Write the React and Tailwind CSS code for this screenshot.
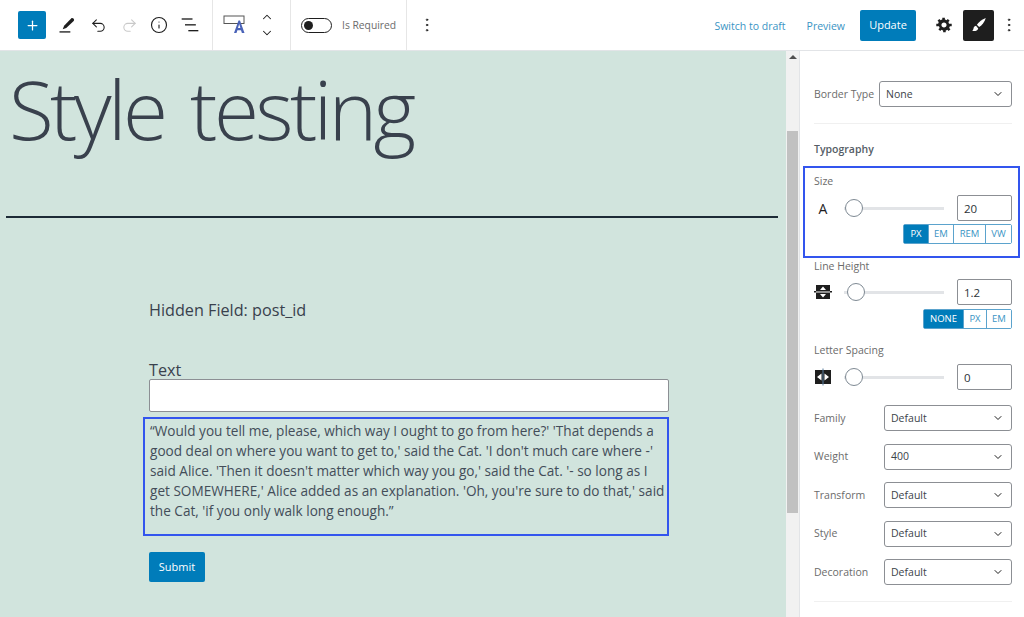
import React from 'react';
import { Plus, Undo2, Redo2, Info, ChevronUp, ChevronDown, MoreVertical } from 'lucide-react';

const font = "font-['Open_Sans','Noto_Sans',sans-serif]";

const Pen = () => (
  <svg width="20" height="20" viewBox="0 0 24 24" fill="#1e1e1e">
    <path d="M20 4.500c-1-1-2.200-1.200-3-.4L8.500 13l-1.600 4.200 4.200-1.500L20 7.300c.6-.8.6-2 0-2.800z" />
    <rect x="3" y="19.500" width="13" height="1.600" />
  </svg>
);

const ListView = () => (
  <svg width="20" height="20" viewBox="0 0 24 24" fill="#1e1e1e">
    <rect x="2" y="4" width="13" height="1.600" />
    <rect x="6" y="11" width="13" height="1.600" />
    <rect x="10" y="18" width="12" height="1.600" />
  </svg>
);

const BlockIcon = () => (
  <svg width="26" height="22" viewBox="0 0 26 22">
    <rect x="1" y="2" width="20" height="7.500" fill="#fff" stroke="#555" strokeWidth="1" />
    <path d="M11 19 15.500 6.500h1.500L21.500 19h-2.600l-.9-2.800h-3.600l-.9 2.800zM15 14h2.400L16.200 10z" fill="#4a63b8" />
  </svg>
);

const Gear = () => (
  <svg width="16" height="18" viewBox="0 0 18 21" fill="#1e1e1e" fillRule="evenodd">
    <path d="M18 12h-2.180c-.17.7-.44 1.350-.81 1.930l1.540 1.540-2.100 2.100-1.540-1.540c-.58.36-1.230.63-1.910.79V19H8v-2.180c-.68-.16-1.330-.43-1.910-.79l-1.540 1.540-2.120-2.120 1.540-1.540c-.36-.58-.63-1.230-.79-1.910H0V9h2.180c.16-.68.43-1.330.79-1.910L1.430 5.550l2.120-2.120 1.540 1.540c.58-.36 1.230-.63 1.910-.79V2h3v2.180c.68.16 1.330.43 1.910.79l1.540-1.540 2.120 2.120-1.540 1.540c.36.58.63 1.230.79 1.910H18v3zM9 13.500c1.660 0 3-1.340 3-3s-1.340-3-3-3-3 1.340-3 3 1.340 3 3 3z" />
  </svg>
);

const Brush = () => (
  <svg width="18" height="18" viewBox="0 0 24 24" fill="#fff">
    <path d="M21 2.500c-4.500 1.500-9.500 5.500-11.800 9.200l3 3C16 12.300 19.800 7.200 21 2.500z" />
    <path d="M8 13c-2.400.4-3 2-3.300 3.700-.2 1.200-.8 2.100-1.700 2.800 3 1.200 6.800.5 8-3z" />
  </svg>
);

const LineHeightIcon = () => (
  <svg width="18" height="18" viewBox="0 0 18 18">
    <rect x="2" y="2" width="14" height="14" fill="#1e1e1e" />
    <rect x="0" y="8" width="18" height="1.500" fill="#1e1e1e" />
    <rect x="2" y="8.500" width="14" height="1" fill="#fff" />
    <path d="M9 3.500 12 7H6zM9 14.500 6 11h6z" fill="#fff" />
  </svg>
);

const LetterSpacingIcon = () => (
  <svg width="18" height="18" viewBox="0 0 18 18">
    <rect x="1" y="2" width="16" height="14" fill="#1e1e1e" />
    <rect x="8.500" y="0.500" width="1" height="17" fill="#5b7fa0" />
    <path d="M3 9 7.500 5.500v7zM15 9l-4.500-3.500v7z" fill="#fff" />
  </svg>
);

const ToolbarDivider = () => <div className="w-px h-[50px] bg-[#e6e6e6]" />;

const Select = ({ label, value, width = 'w-[128px]' }) => (
  <div className="flex items-center justify-between h-[26px]">
    <span className="pt-[1px] text-[10.500px] text-[#6b6b6b]">{label}</span>
    <div className={`${width} h-[26px] border border-[#8c8f94] rounded-[3px] bg-white flex items-center justify-between pl-[6px] pr-[7px] text-[10.500px] text-[#3c434a]`}>
      <span className="pt-[1px]">{value}</span>
      <ChevronDown className="w-[12px] h-[12px] text-[#1e1e1e]" strokeWidth={2} />
    </div>
  </div>
);

const Slider = ({ icon, value, thumb = 'left-[1px]' }) => (
  <div className="flex items-center h-[26px]">
    <div className="w-[18px] flex justify-center text-[14px] font-medium text-[#1e1e1e]">{icon}</div>
    <div className="relative flex-1 flex items-center ml-[12px] mr-[13px] h-[18px]">
      <div className="w-full h-[3px] bg-[#e2e4e7]" />
      <div className={`absolute ${thumb} w-[18px] h-[18px] rounded-full border border-[#7e8993] bg-white`} />
    </div>
    <div className="w-[55px] h-[26px] border border-[#8c8f94] rounded-[2px] bg-white flex items-center pl-[6px] pt-[1px] text-[11.500px] text-[#2c3338]">{value}</div>
  </div>
);

const Units = ({ items }) => (
  <div className="flex justify-end">
    <div className="flex h-[20px] border border-[#5ba3cd] rounded-[2px]">
      {items.map((u, i) => (
        <div
          key={u.label}
          className={`${u.w} flex items-center justify-center text-[9.500px] ${i > 0 ? 'border-l border-[#5ba3cd]' : ''} ${u.active ? 'bg-[#007cba] text-white' : 'bg-white text-[#3a94c4]'}`}
        >
          {u.label}
        </div>
      ))}
    </div>
  </div>
);

export default function App() {
  return (
    <div className={`w-[1024px] h-[617px] overflow-hidden bg-white flex flex-col ${font}`}>
      {/* Top toolbar */}
      <header className="h-[51px] shrink-0 flex items-center border-b border-[#e2e4e7] bg-white">
        <div className="w-[212px] flex items-center pl-[18px]">
          <button className="w-[28px] h-[28px] bg-[#007cba] rounded-[2px] flex items-center justify-center">
            <Plus className="w-[15px] h-[15px] text-white" strokeWidth={2} />
          </button>
          <div className="ml-[11px] w-[20px] flex justify-center"><Pen /></div>
          <div className="ml-[11px] w-[20px] flex justify-center">
            <Undo2 className="w-[17px] h-[17px] text-[#1e1e1e]" strokeWidth={1.5} />
          </div>
          <div className="ml-[11px] w-[20px] flex justify-center">
            <Redo2 className="w-[17px] h-[17px] text-[#c9c9c9]" strokeWidth={1.5} />
          </div>
          <div className="ml-[10px] w-[20px] flex justify-center">
            <Info className="w-[18px] h-[18px] text-[#1e1e1e]" strokeWidth={1.5} />
          </div>
          <div className="ml-[11px]"><ListView /></div>
        </div>
        <ToolbarDivider />
        <div className="w-[77px] flex items-center pl-[10px]">
          <BlockIcon />
          <div className="ml-[11px] flex flex-col items-center gap-[2px]">
            <ChevronUp className="w-[14px] h-[14px] text-[#1e1e1e]" strokeWidth={1.800} />
            <ChevronDown className="w-[14px] h-[14px] text-[#1e1e1e]" strokeWidth={1.800} />
          </div>
        </div>
        <ToolbarDivider />
        <div className="w-[115px] flex items-center pl-[10px]">
          <div className="w-[31px] h-[15px] rounded-full border border-[#1e1e1e] flex items-center pl-[2px]">
            <div className="w-[9px] h-[9px] rounded-full bg-[#1e1e1e]" />
          </div>
          <span className="ml-[10px] mt-[2px] text-[10.300px] text-[#6b6b6b]">Is Required</span>
        </div>
        <ToolbarDivider />
        <MoreVertical className="ml-[11px] w-[18px] h-[18px] text-[#1e1e1e]" strokeWidth={1.300} />
        <div className="flex-1" />
        <span className="mt-[3px] text-[10.500px] text-[#3a94c4]">Switch to draft</span>
        <span className="ml-[21px] mt-[3px] text-[10.500px] text-[#3a94c4]">Preview</span>
        <button className="ml-[15px] w-[56px] h-[31px] pt-[1px] bg-[#007cba] rounded-[2px] text-white text-[11px] font-medium">Update</button>
        <div className="ml-[20px] flex"><Gear /></div>
        <button className="ml-[11px] w-[31px] h-[31px] bg-[#1e1e1e] rounded-[2px] flex items-center justify-center"><Brush /></button>
        <MoreVertical className="ml-[6px] mr-[6px] w-[18px] h-[18px] text-[#1e1e1e]" strokeWidth={1.300} />
      </header>

      <div className="flex-1 flex min-h-0">
        {/* Canvas */}
        <main className="w-[786px] shrink-0 bg-[#d1e4dd] text-[#39414d] overflow-hidden">
          <h1 className="pl-[9px] pt-[9px] h-[165px] text-[82px] leading-[96px] font-light tracking-[-3.600px] whitespace-nowrap [word-spacing:8px]">Style testing</h1>
          <div className="ml-[6px] w-[772px] h-[2px] bg-[#1d2b36]" />
          <div className="ml-[149px] w-[520px]">
            <p className="mt-[81px] text-[16.200px] leading-[22px]">Hidden Field: post_id</p>
            <p className="mt-[38px] text-[16.200px] leading-[22px]">Text</p>
            <div className="mt-[-2px] h-[33px] bg-white border border-[#8c8f94] rounded-[2px]" />
            <div className="mt-[5px] ml-[-6px] w-[526px] h-[119px] border-2 border-[#3355ee] pl-[5px] pr-[2px] pt-[2px] text-[13.600px] leading-[20px] text-[#434d59]">
              “Would you tell me, please, which way I ought to go from here?' 'That depends a good deal on where you want to get to,' said the Cat. 'I don't much care where -' said Alice. 'Then it doesn't matter which way you go,' said the Cat. '- so long as I get SOMEWHERE,' Alice added as an explanation. 'Oh, you're sure to do that,' said the Cat, 'if you only walk long enough.”
            </div>
            <button className="mt-[16px] w-[56px] h-[30px] bg-[#007cba] rounded-[2px] text-white text-[11px] font-medium">Submit</button>
          </div>
        </main>

        {/* Scrollbar */}
        <div className="w-[13px] shrink-0 bg-[#f1f1f1] flex flex-col items-center">
          <div className="h-[80px] w-full flex justify-center pt-[4px]">
            <div className="w-0 h-0 border-l-[4px] border-r-[4px] border-b-[4px] border-l-transparent border-r-transparent border-b-[#505050]" />
          </div>
          <div className="h-[382px] w-[11px] bg-[#c1c1c1]" />
        </div>

        {/* Settings sidebar */}
        <aside className="flex-1 bg-white border-l border-[#e2e4e7] pl-[14px] pr-[12px] overflow-hidden">
          <div className="mt-[30px]">
            <Select label="Border Type" value="None" width="w-[133px]" />
          </div>
          <div className="mt-[16px] h-px bg-[#f0f0f0]" />
          <div className="mt-[17px] text-[10.500px] font-semibold text-[#555d66] leading-[16px]">Typography</div>

          <div className="mt-[9px] ml-[-11px] mr-[-8px] h-[92px] border-2 border-[#3355ee] pl-[9px] pr-[6px] pt-[5px]">
            <div className="text-[10.500px] text-[#6b6b6b] leading-[16px]">Size</div>
            <div className="mt-[6px]"><Slider icon="A" value="20" /></div>
            <div className="mt-[3px]">
              <Units items={[
                { label: 'PX', w: 'w-[24px]', active: true },
                { label: 'EM', w: 'w-[25px]' },
                { label: 'REM', w: 'w-[32px]' },
                { label: 'VW', w: 'w-[26px]' },
              ]} />
            </div>
          </div>

          <div className="text-[10.500px] text-[#6b6b6b] leading-[16px]">Line Height</div>
          <div className="mt-[5px]"><Slider icon={<LineHeightIcon />} value="1.2" thumb="left-[3px]" /></div>
          <div className="mt-[4px]">
            <Units items={[
              { label: 'NONE', w: 'w-[39px]', active: true },
              { label: 'PX', w: 'w-[23px]' },
              { label: 'EM', w: 'w-[25px]' },
            ]} />
          </div>

          <div className="mt-[13px] text-[10.500px] text-[#6b6b6b] leading-[16px]">Letter Spacing</div>
          <div className="mt-[6px]"><Slider icon={<LetterSpacingIcon />} value="0" /></div>

          <div className="mt-[15px] flex flex-col gap-[12.500px]">
            <Select label="Family" value="Default" />
            <Select label="Weight" value="400" />
            <Select label="Transform" value="Default" />
            <Select label="Style" value="Default" />
            <Select label="Decoration" value="Default" />
          </div>
          <div className="mt-[16px] h-px bg-[#f0f0f0]" />
        </aside>
      </div>
    </div>
  );
}
